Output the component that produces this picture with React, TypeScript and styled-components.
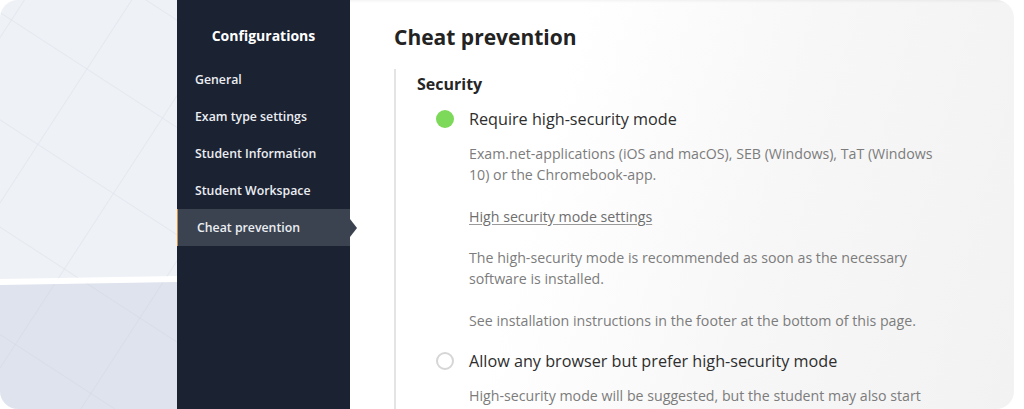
import styled, { createGlobalStyle } from "styled-components";

const GlobalStyle = createGlobalStyle`
  html, body {
    margin: 0;
    padding: 0;
    background: #ffffff;
  }
  body {
    font-family: "Open Sans", "Liberation Sans", sans-serif;
    -webkit-font-smoothing: antialiased;
  }
`;

const Frame = styled.div`
  width: 1014px;
  height: 409px;
  display: flex;
  border-radius: 18px;
  overflow: hidden;
`;

const Backdrop = styled.div`
  width: 177px;
  height: 100%;
  flex-shrink: 0;
  background: #ffffff;
`;

const Sidebar = styled.nav`
  width: 173px;
  flex-shrink: 0;
  background: #1b2232;
  display: flex;
  flex-direction: column;
  position: relative;
  z-index: 1;
`;

const SideTitle = styled.h2`
  margin: 26px 0 16px;
  text-align: center;
  color: #ffffff;
  font-size: 14px;
  font-weight: 700;
`;

const NavList = styled.ul`
  list-style: none;
  margin: 0;
  padding: 0;
  display: flex;
  flex-direction: column;
`;

const NavItem = styled.li<{ $active?: boolean }>`
  position: relative;
  height: 37px;
  display: flex;
  align-items: center;
  padding-left: ${(p) => (p.$active ? "19px" : "18px")};
  color: #eceef2;
  font-size: 12.3px;
  font-weight: 600;
  background: ${(p) => (p.$active ? "#3b4351" : "transparent")};
  border-left: ${(p) => (p.$active ? "1px solid #d9913e" : "none")};

  ${(p) =>
    p.$active &&
    `
    &::after {
      content: "";
      position: absolute;
      right: -7px;
      top: 50%;
      margin-top: -9px;
      border-top: 9px solid transparent;
      border-bottom: 9px solid transparent;
      border-left: 7px solid #3b4351;
    }
  `}
`;

const Content = styled.main`
  flex: 1;
  padding: 23px 0 0 44px;
  background: linear-gradient(105deg, #ffffff 30%, #f7f7f7 62%, #f2f2f2 100%);
  box-shadow: inset 0 3px 3px -2px rgba(0, 0, 0, 0.06);
`;

const Heading = styled.h1`
  margin: 0 0 18px;
  font-size: 21px;
  font-weight: 700;
  color: #232323;
`;

const Section = styled.section`
  border-left: 2px solid #e4e4e4;
  padding: 4px 0 0 21px;
  height: 400px;
`;

const SectionTitle = styled.h3`
  margin: 0 0 13px;
  font-size: 16px;
  font-weight: 700;
  color: #262626;
`;

const Option = styled.div`
  display: flex;
  align-items: center;
  gap: 15px;
  padding-left: 19px;
  height: 22px;
`;

const Radio = styled.span<{ $checked?: boolean }>`
  width: 18px;
  height: 18px;
  border-radius: 50%;
  box-sizing: border-box;
  background: ${(p) => (p.$checked ? "#7dd959" : "#ffffff")};
  border: ${(p) => (p.$checked ? "none" : "2px solid #d6d6d6")};
`;

const OptionLabel = styled.span`
  font-size: 16.2px;
  color: #2e2e2e;
`;

const Description = styled.div`
  padding-left: 52px;
  margin: 13px 0 19px;
  width: 470px;
`;

const Para = styled.p`
  margin: 0 0 20.5px;
  font-size: 14.2px;
  line-height: 21px;
  color: #7c7c7c;
  &:last-child {
    margin-bottom: 0;
  }
`;

const SettingsLink = styled.a`
  color: #6e6e6e;
  text-decoration: underline;
  text-underline-offset: 2px;
  text-decoration-color: #9a9a9a;
`;

const BackdropArt = () => (
  <svg width="177" height="409" viewBox="0 0 177 409">
    <defs>
      <pattern
        id="grid"
        width="90"
        height="90"
        patternUnits="userSpaceOnUse"
        patternTransform="rotate(33) translate(20 10)"
      >
        <path d="M0 0 H90 M0 0 V90" stroke="#cfd5df" strokeWidth="1" fill="none" />
      </pattern>
      <clipPath id="top">
        <path d="M0 0 H177 V276 L0 279 Z" />
      </clipPath>
      <clipPath id="bottom">
        <path d="M0 285 L177 282 V409 H0 Z" />
      </clipPath>
    </defs>
    <g clipPath="url(#top)">
      <rect width="177" height="409" fill="#eef1f6" />
      <rect width="177" height="409" fill="url(#grid)" opacity="0.6" />
    </g>
    <g clipPath="url(#bottom)">
      <rect width="177" height="409" fill="#dee3ed" />
      <rect width="177" height="409" fill="url(#grid)" opacity="0.8" />
    </g>
  </svg>
);

const navItems = [
  "General",
  "Exam type settings",
  "Student Information",
  "Student Workspace",
  "Cheat prevention",
];

export default function App() {
  return (
    <>
      <GlobalStyle />
      <Frame>
        <Backdrop>
          <BackdropArt />
        </Backdrop>
        <Sidebar>
          <SideTitle>Configurations</SideTitle>
          <NavList>
            {navItems.map((item) => (
              <NavItem key={item} $active={item === "Cheat prevention"}>
                {item}
              </NavItem>
            ))}
          </NavList>
        </Sidebar>
        <Content>
          <Heading>Cheat prevention</Heading>
          <Section>
            <SectionTitle>Security</SectionTitle>
            <Option>
              <Radio $checked />
              <OptionLabel>Require high-security mode</OptionLabel>
            </Option>
            <Description>
              <Para>
                Exam.net-applications (iOS and macOS), SEB (Windows), TaT (Windows
                10) or the Chromebook-app.
              </Para>
              <Para>
                <SettingsLink>High security mode settings</SettingsLink>
              </Para>
              <Para>
                The high-security mode is recommended as soon as the necessary
                software is installed.
              </Para>
              <Para>See installation instructions in the footer at the bottom of this page.</Para>
            </Description>
            <Option>
              <Radio />
              <OptionLabel>Allow any browser but prefer high-security mode</OptionLabel>
            </Option>
            <Description>
              <Para>
                High-security mode will be suggested, but the student may also start
                the exam in a regular browser.
              </Para>
            </Description>
          </Section>
        </Content>
      </Frame>
    </>
  );
}
